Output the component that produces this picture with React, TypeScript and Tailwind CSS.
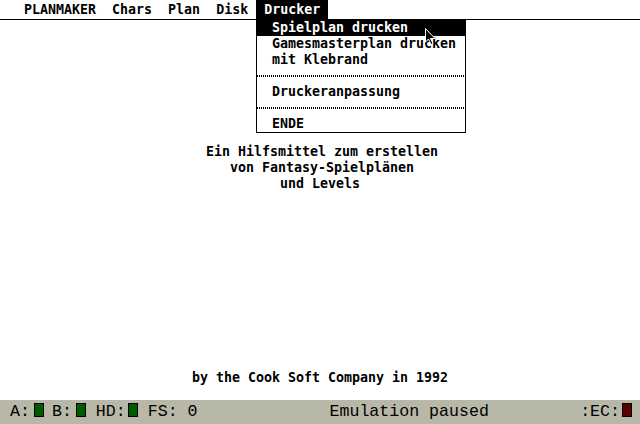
import React from 'react';

const atari = { fontFamily: '"DejaVu Sans Mono", "Liberation Mono", monospace' };
const hatari = { fontFamily: '"Liberation Mono", "DejaVu Sans Mono", monospace' };

function Separator() {
  return (
    <div className="h-4 flex items-center">
      <div
        className="w-full h-[2px]"
        style={{
          backgroundImage:
            'repeating-linear-gradient(90deg, #000 0px, #000 1px, transparent 1px, transparent 2px)',
          backgroundSize: '8px 2px',
        }}
      />
    </div>
  );
}

function Led({ color }: { color: string }) {
  return <span className={`inline-block w-[10px] h-[14px] border border-black ${color}`} />;
}

export default function App() {
  const titles = ['PLANMAKER', 'Chars', 'Plan', 'Disk'];
  return (
    <div className="relative w-[640px] h-[424px] bg-white overflow-hidden text-black" style={atari}>
      {/* Menu bar */}
      <div className="h-[20px] border-b border-black flex pl-4 font-bold text-[13.3px] leading-[19px]">
        {titles.map((t) => (
          <span key={t} className="px-2 whitespace-pre">
            {t}
          </span>
        ))}
        <span className="px-2 bg-black text-white">Drucker</span>
      </div>

      {/* Desktop content */}
      <div className="h-[380px] flex flex-col items-center font-bold text-[13.3px] leading-4">
        <div className="mt-[124px] flex flex-col items-center whitespace-pre">
          <span className="pl-1">Ein Hilfsmittel zum erstellen</span>
          <span className="pl-1">von Fantasy-Spielplänen</span>
          <span>und Levels</span>
        </div>
        <div className="mt-[178px] whitespace-pre">by the Cook Soft Company in 1992</div>
      </div>

      {/* Status bar */}
      <div className="h-[24px] bg-[#b8b8a8] flex items-center text-[16.6px] leading-none pl-[10px]" style={hatari}>
        <span>A:</span>
        <span className="ml-[4px] mr-[8px]"><Led color="bg-[#005a00]" /></span>
        <span>B:</span>
        <span className="ml-[4px] mr-[10px]"><Led color="bg-[#005a00]" /></span>
        <span>HD:</span>
        <span className="ml-[2px] mr-[10px]"><Led color="bg-[#005a00]" /></span>
        <span className="whitespace-pre">FS: 0</span>
        <span className="ml-[132px]">Emulation paused</span>
        <span className="ml-auto">:EC:</span>
        <span className="ml-[2px] mr-[8px]"><Led color="bg-[#5a0000]" /></span>
      </div>

      {/* Dropdown menu */}
      <div className="absolute left-[256px] top-[19px] w-[210px] bg-white border border-black font-bold text-[13.3px] leading-4">
        <div className="bg-black text-white pl-[15px] h-4">Spielplan drucken</div>
        <div className="pl-[15px] h-4">Gamesmasterplan drucken</div>
        <div className="pl-[15px] h-4">mit Klebrand</div>
        <Separator />
        <div className="pl-[15px] h-4">Druckeranpassung</div>
        <Separator />
        <div className="pl-[15px] h-4">ENDE</div>
      </div>

      {/* Mouse pointer */}
      <svg className="absolute left-[425px] top-[28px]" width="12" height="18" viewBox="0 0 12 18">
        <path d="M0.5 0.5 L0.5 14 L3.5 11 L6 16.5 L8 15.5 L5.5 10.5 L10 10.5 Z" fill="#000" stroke="#fff" strokeWidth="1" />
      </svg>
    </div>
  );
}
